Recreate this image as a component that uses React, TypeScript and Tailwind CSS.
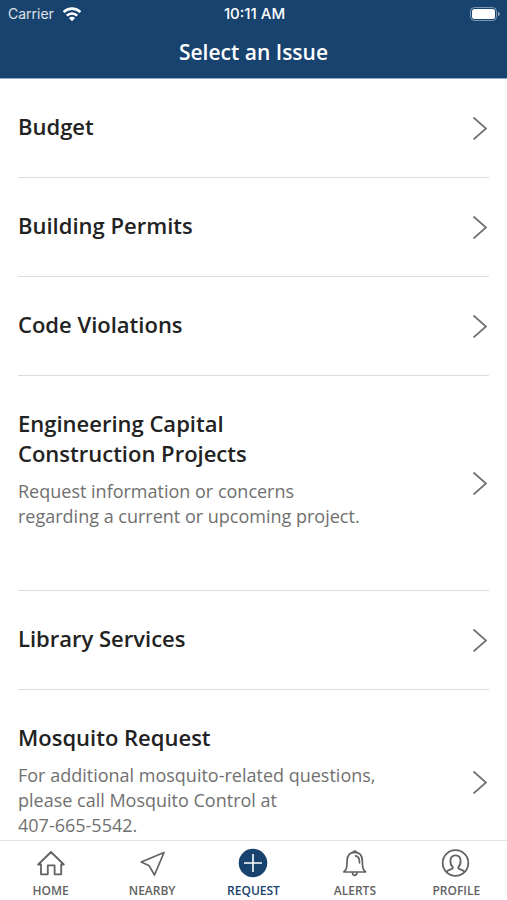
import type { ReactNode } from 'react';

interface Issue {
  id: string;
  title: string;
  description?: string;
}

interface Tab {
  label: string;
  icon: ReactNode;
  active?: boolean;
}

const issues: Issue[] = [
  { id: 'budget', title: 'Budget' },
  { id: 'permits', title: 'Building Permits' },
  { id: 'code', title: 'Code Violations' },
  {
    id: 'engineering',
    title: 'Engineering Capital\nConstruction Projects',
    description: 'Request information or concerns\nregarding a current or upcoming project.\n\n',
  },
  { id: 'library', title: 'Library Services' },
  {
    id: 'mosquito',
    title: 'Mosquito Request',
    description: 'For additional mosquito-related questions,\nplease call Mosquito Control at\n407-665-5542.',
  },
];

const tabs: Tab[] = [
  {
    label: 'HOME',
    icon: (
      <svg className="w-8 h-8" viewBox="0 0 32 32" fill="none" stroke="currentColor" strokeWidth="1.8" strokeLinejoin="round" strokeLinecap="round">
        <path d="M3.2 17.500 16 5l12.800 12.500h-2.600v9.800h-6.600v-9h-6.800v9H6v-9.800Z" />
      </svg>
    ),
  },
  {
    label: 'NEARBY',
    icon: (
      <svg className="w-8 h-8" viewBox="0 0 32 32" fill="none" stroke="currentColor" strokeWidth="1.7" strokeLinejoin="round">
        <path d="M28 5.500 18.500 28 13.200 18.800 5.200 15Z" />
      </svg>
    ),
  },
  {
    label: 'REQUEST',
    active: true,
    icon: (
      <svg className="w-8 h-8" viewBox="0 0 32 32" fill="none">
        <circle cx="16" cy="16" r="14.3" fill="currentColor" />
        <path d="M16 7v18M7 16h18" stroke="white" strokeWidth="1.6" />
      </svg>
    ),
  },
  {
    label: 'ALERTS',
    icon: (
      <svg className="w-8 h-8" viewBox="0 0 32 32" fill="none" stroke="currentColor" strokeWidth="1.7" strokeLinejoin="round" strokeLinecap="round">
        <path d="M13.8 5.400a2 2 0 0 1 3.800 0" />
        <path d="M4.800 25h21.800c-2-1.800-2.900-3.500-3-5.800l-.3-5.700c-.2-5-3-8.100-7.600-8.100s-7.400 3.100-7.600 8.100l-.3 5.700c-.1 2.300-1 4-3 5.800Z" />
        <path d="M16.500 8.800c2.300.3 3.700 2 3.900 4.800l.1 2.200" />
        <path d="M13.400 25.600c.2 1.800 1 2.700 2.300 2.700s2.100-.9 2.300-2.700" />
      </svg>
    ),
  },
  {
    label: 'PROFILE',
    icon: (
      <svg className="w-8 h-8" viewBox="0 0 32 32" fill="none" stroke="currentColor" strokeWidth="1.8" strokeLinejoin="round">
        <circle cx="15.500" cy="16" r="12.800" />
        <path d="M6.400 24.800c1-1.200 2.500-1.800 4.300-2.400 1.700-.6 2.300-1 2.100-2.300-1.600-1.400-2.400-3.500-2.400-6.200 0-3.600 1.900-5.600 5.100-5.600s5.100 2 5.100 5.600c0 2.700-.8 4.800-2.400 6.200-.2 1.300.4 1.700 2.100 2.300 1.800.6 3.300 1.200 4.300 2.400" />
      </svg>
    ),
  },
];

function StatusBar() {
  return (
    <div className="grid grid-cols-3 items-center h-7 pl-2 pr-1.5 font-['Inter','Liberation_Sans',sans-serif] text-[14px] leading-5">
      <div className="flex items-center gap-2 text-white/85">
        <span>Carrier</span>
        <svg className="w-5 h-4 text-white" viewBox="0 0 20 16" fill="none" stroke="currentColor" strokeWidth="2.600">
          <path d="M1.600 6.100a12 12 0 0 1 16.800 0" />
          <path d="M4.800 9.600a7.400 7.400 0 0 1 10.400 0" />
          <path d="M10 15.200 6.900 12a4.400 4.400 0 0 1 6.200 0Z" fill="currentColor" stroke="none" />
        </svg>
      </div>
      <span className="text-center text-[15px] font-medium">10:11 AM</span>
      <svg className="w-8 h-4 justify-self-end" viewBox="0 0 32 16" fill="none">
        <rect x="1.500" y="1.500" width="26" height="13" rx="4" stroke="white" strokeOpacity="0.45" />
        <rect x="3" y="3" width="23" height="10" rx="2.500" fill="white" />
        <path d="M29 5.800c1.200.4 1.800 1.200 1.800 2.200s-.6 1.800-1.800 2.200Z" fill="white" fillOpacity="0.5" />
      </svg>
    </div>
  );
}

export default function SelectIssue() {
  return (
    <div className="flex flex-col h-screen bg-white font-['Open_Sans','Noto_Sans',sans-serif] text-[#222222]">
      <header className="shrink-0 bg-[#17436e] text-white border-b border-[#8ba9c9]">
        <StatusBar />
        <h1 className="h-[50px] pt-2 text-center text-[21px] leading-8 font-semibold">Select an Issue</h1>
      </header>

      <main className="flex-1 min-h-0 overflow-y-auto [scrollbar-width:none]">
        <ul className="mx-[18px]">
          {issues.map((issue) => (
            <li key={issue.id} className="border-b border-[#dcdcdc]">
              <button className="flex items-center justify-between w-full text-left">
                <span className="block pt-8 pb-9">
                  <span className="block whitespace-pre-line text-[22px] leading-[30px] font-semibold">{issue.title}</span>
                  {issue.description && (
                    <span className="block mt-[11px] whitespace-pre-line text-[18px] leading-[25px] text-[#707070]">
                      {issue.description}
                    </span>
                  )}
                </span>
                <svg className="w-5 h-6 shrink-0" viewBox="0 0 20 24" fill="none" stroke="#707070" strokeWidth="1.700">
                  <path d="M4.500 1.500 17 12.500 4.500 23.500" />
                </svg>
              </button>
            </li>
          ))}
        </ul>
      </main>

      <nav className="shrink-0 grid grid-cols-5 h-[60px] bg-white border-t border-[#e2e2e2]">
        {tabs.map((tab) => (
          <a
            key={tab.label}
            href="#"
            className={`flex flex-col items-center gap-0.5 pt-1.5 text-[12px] leading-5 font-semibold ${tab.active ? 'text-[#17436e]' : 'text-[#626262]'}`}
          >
            {tab.icon}
            {tab.label}
          </a>
        ))}
      </nav>
    </div>
  );
}
